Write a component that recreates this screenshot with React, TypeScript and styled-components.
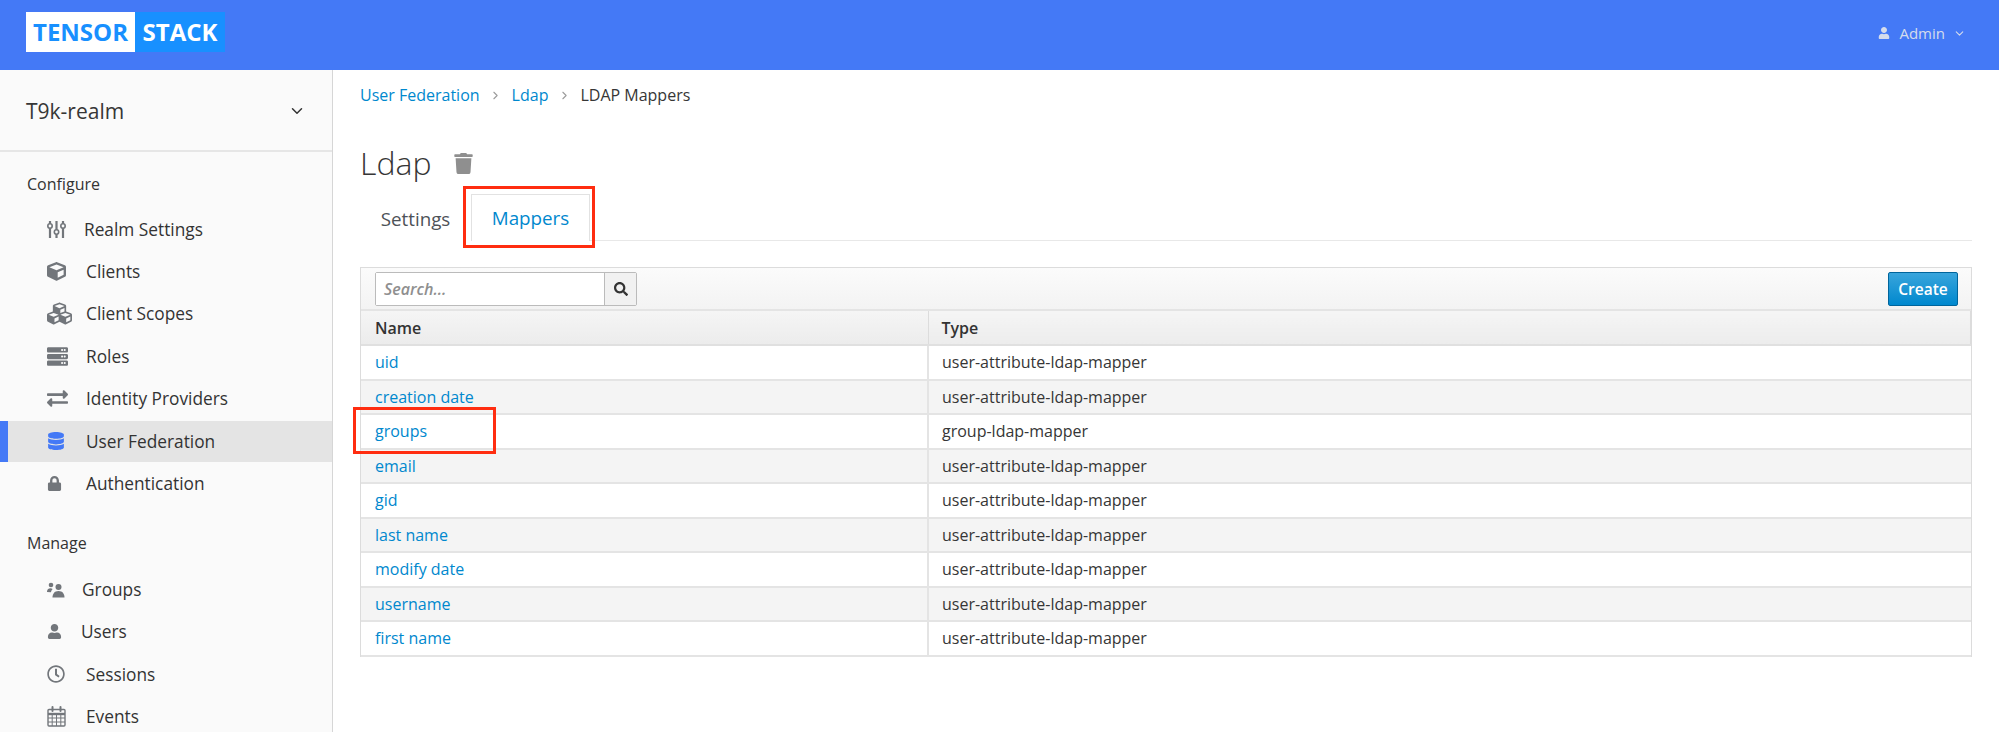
import { ReactNode } from "react";
import styled, { createGlobalStyle } from "styled-components";
import { ChevronDown, ChevronRight } from "lucide-react";
import {
  FaCube,
  FaCubes,
  FaServer,
  FaExchangeAlt,
  FaDatabase,
  FaLock,
  FaUser,
  FaRegClock,
  FaTrash,
  FaSearch,
} from "react-icons/fa";

const GlobalStyle = createGlobalStyle`
  html, body { margin: 0; padding: 0; height: 100%; overflow: hidden; }
  body { font-family: "Open Sans", "Liberation Sans", sans-serif; color: #363636; background: #fff; }
  * { box-sizing: border-box; }
`;

function SlidersIcon() {
  return (
    <svg width="19" height="19" viewBox="0 0 19 19" fill="none" stroke="#72767b">
      <path d="M3 1v17M9.5 1v17M16 1v17" strokeWidth="2.2" />
      <circle cx="3" cy="6" r="2.2" fill="#fafafa" strokeWidth="1.6" />
      <circle cx="9.5" cy="12" r="2.2" fill="#fafafa" strokeWidth="1.6" />
      <circle cx="16" cy="6" r="2.2" fill="#fafafa" strokeWidth="1.6" />
    </svg>
  );
}

function CalendarIcon() {
  return (
    <svg width="19" height="21" viewBox="0 0 19 21" fill="none" stroke="#72767b">
      <rect x="1" y="3.5" width="17" height="16.5" rx="1" strokeWidth="1.4" />
      <path d="M1 8h17" strokeWidth="2.4" />
      <path d="M1 12h17M1 16h17M5.2 8v12M9.5 8v12M13.8 8v12" strokeWidth="1" />
      <path d="M5.5 1v4M13.5 1v4" strokeWidth="2" strokeLinecap="round" />
    </svg>
  );
}

function GroupsIcon() {
  return (
    <svg width="18" height="16" viewBox="0 0 18 16" fill="#72767b">
      <circle cx="4" cy="3" r="2.3" />
      <path d="M0 9.5C.3 7.3 1.6 6.3 3.3 6.3c1 0 1.7.3 2.3.8-.9.9-1.4 1.9-1.7 3.1L0 9.9z" />
      <circle cx="11.5" cy="5" r="3" />
      <path d="M5.5 15.5c0-3.7 1.8-6.6 6-6.6s6 2.9 6 6.6z" />
    </svg>
  );
}

const configureItems: { label: string; icon: ReactNode; width: number; active?: boolean }[] = [
  { label: "Realm Settings", icon: <SlidersIcon />, width: 37 },
  { label: "Clients", icon: <FaCube size={19} />, width: 39 },
  { label: "Client Scopes", icon: <FaCubes size={25} />, width: 39 },
  { label: "Roles", icon: <FaServer size={21} />, width: 39 },
  { label: "Identity Providers", icon: <FaExchangeAlt size={21} />, width: 39 },
  { label: "User Federation", icon: <FaDatabase size={18} />, width: 39, active: true },
  { label: "Authentication", icon: <FaLock size={15} />, width: 39 },
];

const manageItems: { label: string; icon: ReactNode; width: number }[] = [
  { label: "Groups", icon: <GroupsIcon />, width: 35 },
  { label: "Users", icon: <FaUser size={15} />, width: 34 },
  { label: "Sessions", icon: <FaRegClock size={18} />, width: 39 },
  { label: "Events", icon: <CalendarIcon />, width: 39 },
];

const mappers = [
  ["uid", "user-attribute-ldap-mapper"],
  ["creation date", "user-attribute-ldap-mapper"],
  ["groups", "group-ldap-mapper"],
  ["email", "user-attribute-ldap-mapper"],
  ["gid", "user-attribute-ldap-mapper"],
  ["last name", "user-attribute-ldap-mapper"],
  ["modify date", "user-attribute-ldap-mapper"],
  ["username", "user-attribute-ldap-mapper"],
  ["first name", "user-attribute-ldap-mapper"],
];

export default function App() {
  return (
    <Page>
      <GlobalStyle />
      <Header>
        <Logo>
          <LogoLeft>TENSOR</LogoLeft>
          <LogoRight>STACK</LogoRight>
        </Logo>
        <UserMenu>
          <FaUser size={12} />
          <span>Admin</span>
          <ChevronDown size={13} />
        </UserMenu>
      </Header>
      <Body>
        <Sidebar>
          <Realm>
            <span>T9k-realm</span>
            <ChevronDown size={18} color="#333" />
          </Realm>
          <SectionTitle>Configure</SectionTitle>
          {configureItems.map((item) => (
            <NavItem key={item.label} $active={item.active}>
              <NavIcon $width={item.width} $active={item.active}>{item.icon}</NavIcon>
              {item.label}
            </NavItem>
          ))}
          <SectionTitle $manage>Manage</SectionTitle>
          {manageItems.map((item) => (
            <NavItem key={item.label}>
              <NavIcon $width={item.width}>{item.icon}</NavIcon>
              {item.label}
            </NavItem>
          ))}
        </Sidebar>
        <Main>
          <Breadcrumb>
            <a>User Federation</a>
            <ChevronRight size={13} color="#9c9c9c" />
            <a>Ldap</a>
            <ChevronRight size={13} color="#9c9c9c" />
            <span>LDAP Mappers</span>
          </Breadcrumb>
          <Title>
            Ldap
            <TrashIcon size={21} />
          </Title>
          <Tabs>
            <Tab>Settings</Tab>
            <Tab $active>Mappers</Tab>
            <TabHighlight />
          </Tabs>
          <TableWrap>
            <Toolbar>
              <SearchBox>
                <SearchInput>Search...</SearchInput>
                <SearchButton>
                  <FaSearch size={14} />
                </SearchButton>
              </SearchBox>
              <CreateButton>Create</CreateButton>
            </Toolbar>
            <Table>
              <thead>
                <tr>
                  <Th $first>Name</Th>
                  <Th>Type</Th>
                </tr>
              </thead>
              <tbody>
                {mappers.map(([name, type]) => (
                  <Row key={name}>
                    <NameCell>{name}</NameCell>
                    <Td>{type}</Td>
                  </Row>
                ))}
              </tbody>
            </Table>
            <RowHighlight />
          </TableWrap>
        </Main>
      </Body>
    </Page>
  );
}

const Page = styled.div`
  height: 100vh;
  display: flex;
  flex-direction: column;
  overflow: hidden;
`;

const Header = styled.header`
  flex: 0 0 70px;
  background: #4479f6;
  display: flex;
  align-items: center;
  justify-content: space-between;
  padding: 0 33px 0 26px;
`;

const Logo = styled.div`
  display: flex;
  height: 40px;
  font-size: 24px;
  font-weight: 700;
  line-height: 40px;
  margin-top: -6px;
`;

const LogoLeft = styled.div`
  width: 109px;
  background: #fff;
  color: #1890ff;
  text-align: center;
`;

const LogoRight = styled.div`
  width: 90px;
  background: #1890ff;
  color: #fff;
  text-align: center;
`;

const UserMenu = styled.div`
  display: flex;
  align-items: center;
  gap: 9px;
  color: #d5dcec;
  font-size: 15px;
  margin-top: -4px;
  svg:last-child { margin-left: -1px; }
`;

const Body = styled.div`
  flex: 1;
  display: flex;
  min-height: 0;
`;

const Sidebar = styled.nav`
  flex: 0 0 333px;
  background: #fafafa;
  border-right: 1px solid #d6d6d6;
  overflow: hidden;
`;

const Realm = styled.div`
  height: 82px;
  display: flex;
  align-items: center;
  justify-content: space-between;
  padding: 2px 26px 0 26px;
  font-size: 21px;
  color: #363636;
  border-bottom: 2px solid #e6e6e6;
`;

const SectionTitle = styled.div<{ $manage?: boolean }>`
  font-size: 16px;
  color: #333;
  padding-left: 27px;
  height: 22px;
  line-height: 22px;
  margin-top: ${(p) => (p.$manage ? "28px" : "21px")};
  margin-bottom: ${(p) => (p.$manage ? "14px" : "13px")};
`;

const NavItem = styled.div<{ $active?: boolean }>`
  height: ${(p) => (p.$active ? "41px" : "42.4px")};
  display: flex;
  align-items: center;
  padding-left: ${(p) => (p.$active ? "39px" : "47px")};
  font-size: 17.3px;
  color: #333;
  background: ${(p) => (p.$active ? "#e4e4e4" : "transparent")};
  border-left: ${(p) => (p.$active ? "8px solid #4479f6" : "none")};
  margin: ${(p) => (p.$active ? "1px 0 0" : "0")};
`;

const NavIcon = styled.span<{ $width: number; $active?: boolean }>`
  width: ${(p) => p.$width}px;
  flex: none;
  display: flex;
  align-items: center;
  color: ${(p) => (p.$active ? "#4479f6" : "#72767b")};
`;

const Main = styled.main`
  flex: 1;
  padding: 0 27px 0 27px;
  min-width: 0;
`;

const Breadcrumb = styled.div`
  display: flex;
  align-items: center;
  gap: 9.5px;
  height: 50px;
  font-size: 16px;
  color: #363636;
  a { color: #0088ce; }
`;

const Title = styled.h1`
  margin: 22px 0 0 0;
  height: 42px;
  display: flex;
  align-items: center;
  gap: 22px;
  font-size: 32px;
  font-weight: 300;
  line-height: 42px;
  color: #363636;
`;

const TrashIcon = styled(FaTrash)`
  color: #8f8f8f;
`;

const Tabs = styled.div`
  position: relative;
  display: flex;
  align-items: flex-end;
  height: 57px;
  border-bottom: 1px solid #e8e8e8;
`;

const Tab = styled.div<{ $active?: boolean }>`
  height: ${(p) => (p.$active ? "47px" : "45px")};
  display: flex;
  align-items: center;
  justify-content: center;
  font-size: 18.8px;
  width: ${(p) => (p.$active ? "119px" : "111px")};
  color: ${(p) => (p.$active ? "#0088ce" : "#4d5258")};
  background: #fff;
  border: ${(p) => (p.$active ? "1px solid #e2e2e2" : "none")};
  border-bottom: none;
  margin-bottom: -1px;
`;

const TabHighlight = styled.div`
  position: absolute;
  left: 103px;
  top: 2px;
  width: 132px;
  height: 62px;
  border: 3px solid #ff2d10;
`;

const TableWrap = styled.div`
  position: relative;
  margin-top: 26px;
  border: 1px solid #dcdcdc;
  border-bottom: none;
`;

const Toolbar = styled.div`
  height: 43px;
  display: flex;
  align-items: center;
  justify-content: space-between;
  padding: 0 13px 0 14px;
  background: linear-gradient(#fbfbfb, #f3f3f3);
  border-bottom: 2px solid #e4e4e4;
`;

const SearchBox = styled.div`
  display: flex;
  height: 34px;
  border: 1px solid #bbb;
  border-radius: 2px;
`;

const SearchInput = styled.div`
  width: 229px;
  background: #fff;
  padding-left: 8px;
  line-height: 32px;
  font-size: 16px;
  font-style: italic;
  font-weight: 600;
  color: #8f8f8f;
  border-right: 1px solid #bbb;
`;

const SearchButton = styled.div`
  width: 31px;
  display: flex;
  align-items: center;
  justify-content: center;
  background: #f1f1f1;
  color: #333;
`;

const CreateButton = styled.div`
  width: 70px;
  height: 34px;
  display: flex;
  align-items: center;
  justify-content: center;
  color: #fff;
  font-size: 15.5px;
  font-weight: 600;
  background: linear-gradient(#39a5dc, #0088ce);
  border: 1px solid #00659c;
  border-radius: 2px;
`;

const Table = styled.table`
  width: 100%;
  border-collapse: collapse;
  table-layout: fixed;
  font-size: 16px;
`;

const Th = styled.th<{ $first?: boolean }>`
  height: 34px;
  width: ${(p) => (p.$first ? "567px" : "auto")};
  padding: 0 0 0 ${(p) => (p.$first ? "14px" : "13px")};
  text-align: left;
  font-weight: 600;
  color: #333;
  background: linear-gradient(#f5f5f5, #ececec);
  border-bottom: 2px solid #e0e0e0;
  border-right: 1px solid #dcdcdc;
`;

const Row = styled.tr`
  &:nth-child(even) { background: #f4f4f4; }
`;

const Td = styled.td`
  height: 34.5px;
  padding: 0 0 0 13px;
  color: #363636;
  border-bottom: 2px solid #e4e4e4;
`;

const NameCell = styled(Td)`
  padding-left: 14px;
  color: #0088ce;
  border-right: 2px solid #e4e4e4;
`;

const RowHighlight = styled.div`
  position: absolute;
  left: -8px;
  top: 139px;
  width: 143px;
  height: 47px;
  border: 3px solid #ff2d10;
`;
